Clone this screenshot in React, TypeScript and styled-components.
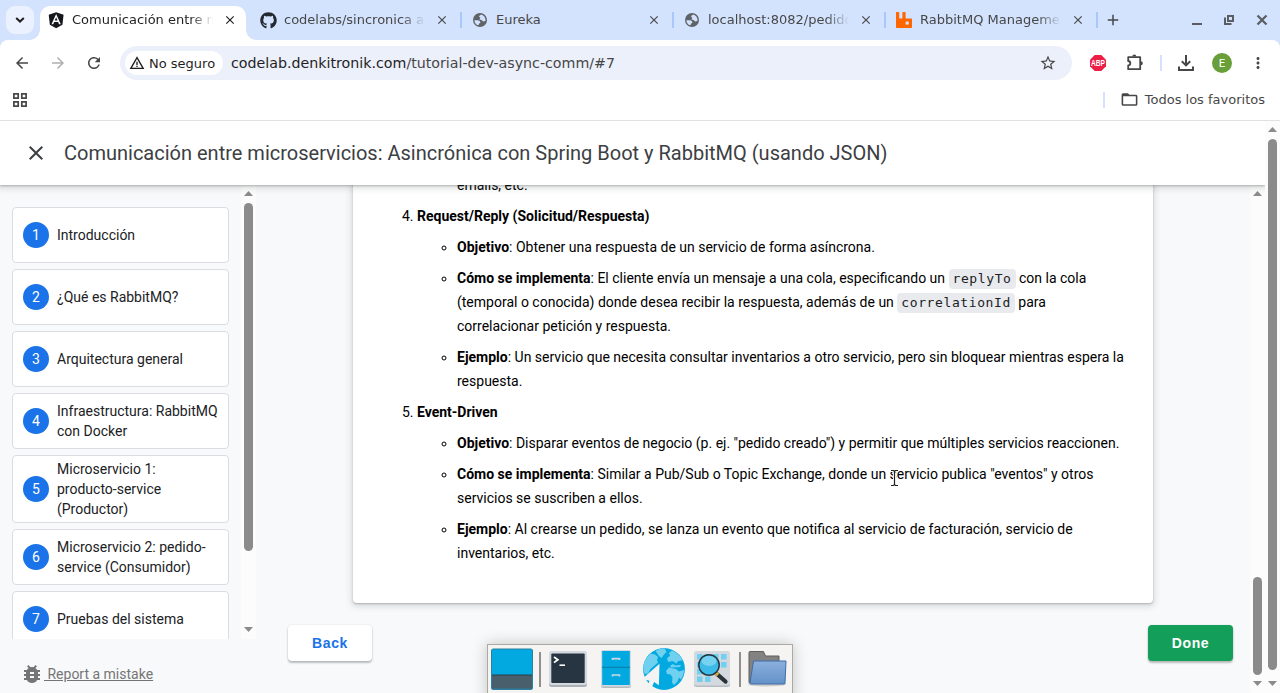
import React from "react";
import styled, { createGlobalStyle, css } from "styled-components";
import {
  MdArrowBack, MdArrowForward, MdRefresh, MdWarningAmber, MdStarBorder,
  MdFolderOpen, MdBugReport, MdClose, MdMoreVert, MdAdd,
} from "react-icons/md";
import { FaAngular, FaGithub } from "react-icons/fa";
import { SiRabbitmq } from "react-icons/si";

const Global = createGlobalStyle`
  * { box-sizing: border-box; }
  body { margin: 0; background: #fff; overflow: hidden; }
  svg { display: block; flex: none; }
`;

const ui = css`font-family: "DejaVu Sans", sans-serif;`;

const Window = styled.div`
  position: relative;
  width: 1280px;
  height: 693px;
  display: flex;
  flex-direction: column;
  overflow: hidden;
  ${ui}
`;

/* ---------- tab strip ---------- */
const TabStrip = styled.div`
  height: 40px;
  flex: none;
  display: flex;
  background: #d3e2fd;
`;
const TabSearch = styled.div`
  width: 28px;
  height: 28px;
  margin: 6px 6px 0 6px;
  border-radius: 9px;
  background: #ebf1fe;
  display: flex;
  align-items: center;
  justify-content: center;
`;
const TabDivider = styled.div`
  width: 2px;
  height: 16px;
  margin-left: auto;
  background: #a8c7fa;
`;
const Tab = styled.div<{ $active?: boolean }>`
  width: 212px;
  height: 40px;
  display: flex;
  align-items: center;
  padding: 0 0 0 10px;
  color: ${(p) => (p.$active ? "#1f1f1f" : "#474747")};
  ${(p) =>
    p.$active &&
    css`
      width: 206px;
      height: 34px;
      margin: 6px 4px 0 0;
      padding: 0 0 6px 8px;
      background: #fff;
      border-radius: 10px 10px 0 0;
      position: relative;
      &::before, &::after {
        content: "";
        position: absolute;
        bottom: 0;
        width: 10px;
        height: 10px;
      }
      &::before { left: -10px; background: radial-gradient(circle at 0 0, transparent 9.5px, #fff 10px); }
      &::after { right: -10px; background: radial-gradient(circle at 10px 0, transparent 9.5px, #fff 10px); }
    `}
`;
const Favicon = styled.div`
  width: 16px;
  height: 16px;
  display: flex;
  align-items: center;
  justify-content: center;
  margin-right: 8px;
  flex: none;
`;
const TabTitle = styled.div<{ $fade?: boolean }>`
  width: 143px;
  font-size: 13px;
  line-height: 20px;
  white-space: nowrap;
  overflow: hidden;
  ${(p) => p.$fade && css`mask-image: linear-gradient(90deg, #000 118px, transparent 141px);`}
`;
const TabClose = styled.div`
  width: 14px;
  height: 14px;
  margin-left: 8px;
`;
const NewTab = styled.div`
  width: 30px;
  display: flex;
  align-items: center;
  justify-content: center;
  color: #474747;
`;
const WindowButtons = styled.div`
  margin-left: auto;
  display: flex;
  align-items: center;
  gap: 21px;
  padding-right: 12px;
`;

/* ---------- toolbar ---------- */
const ToolbarBack = styled.div`
  background: #d3e2fd;
  flex: none;
`;
const Toolbar = styled.div`
  height: 46px;
  display: flex;
  align-items: center;
  background: #fff;
  border-radius: 8px 8px 0 0;
  color: #474747;
`;
const NavButton = styled.div<{ $dim?: boolean }>`
  width: 36px;
  display: flex;
  justify-content: center;
  color: ${(p) => (p.$dim ? "#b0b0b0" : "#474747")};
`;
const NavGroup = styled.div`
  display: flex;
  flex: none;
  padding-left: 4px;
  width: 120px;
`;
const Omnibox = styled.div`
  width: 952px;
  height: 34px;
  flex: none;
  border-radius: 17px;
  background: #ecf0fa;
  display: flex;
  align-items: center;
  padding: 0 15px 0 5px;
`;
const SecurityChip = styled.div`
  width: 98px;
  height: 24px;
  border-radius: 12px;
  background: #fff;
  display: flex;
  align-items: center;
  gap: 4px;
  padding-left: 4px;
  font-size: 13px;
  color: #1f1f1f;
  white-space: nowrap;
`;
const Url = styled.div`
  flex: 1;
  padding-left: 8px;
  font-size: 14.22px;
  color: #474747;
  white-space: nowrap;
  b { font-weight: 400; color: #1f1f1f; }
`;
const Extensions = styled.div`
  flex: 1;
  display: flex;
  align-items: center;
  padding-left: 18px;
`;
const Slot = styled.div<{ $w: number; $pad?: number }>`
  width: ${(p) => p.$w}px;
  padding-left: ${(p) => p.$pad ?? 0}px;
  flex: none;
  display: flex;
  justify-content: center;
`;
const Divider = styled.div`
  width: 2px;
  height: 16px;
  background: #d3e2fd;
`;
const Avatar = styled.div`
  width: 20px;
  height: 20px;
  border-radius: 50%;
  background: #689f38;
  color: #fff;
  font: 11.5px/20px Roboto, sans-serif;
  text-align: center;
`;
const Bookmarks = styled.div`
  height: 35px;
  border-bottom: 1px solid #dfe1e3;
  padding: 0 15px 7px 13px;
  display: flex;
  align-items: center;
  background: #fff;
  color: #474747;
  flex: none;
`;
const AllBookmarks = styled.div`
  margin-left: auto;
  display: flex;
  align-items: center;
  font-size: 13px;
  white-space: nowrap;
  ${Divider} { margin-right: 15px; }
  svg { margin-right: 6px; }
`;

/* ---------- page ---------- */
const Page = styled.div`
  flex: 1;
  min-height: 0;
  display: flex;
`;
const Codelab = styled.div`
  width: 1265px;
  display: flex;
  flex-direction: column;
  overflow: hidden;
  background: #f8f9fa;
  font-family: Roboto, sans-serif;
`;
const Header = styled.div`
  position: relative;
  z-index: 2;
  height: 64px;
  flex: none;
  display: flex;
  align-items: center;
  padding-left: 24px;
  gap: 16px;
  background: #fff;
  color: #3c4043;
  box-shadow: 0 1px 2px rgba(60, 64, 67, 0.3), 0 2px 6px 2px rgba(60, 64, 67, 0.15);
`;
const Title = styled.div`
  font-size: 20px;
  line-height: 28px;
  white-space: nowrap;
`;
const Body = styled.div`
  flex: 1;
  min-height: 0;
  display: flex;
  background: #f8f9fb;
`;
const Sidebar = styled.div`
  width: 256px;
  display: flex;
  flex-direction: column;
`;
const StepsScroller = styled.div`
  height: 454px;
  display: flex;
  overflow: hidden;
`;
const Steps = styled.div`
  width: 241px;
  padding: 22px 12px 0;
  display: flex;
  flex-direction: column;
  gap: 6px;
`;
const Step = styled.div`
  min-height: 56px;
  flex: none;
  display: flex;
  align-items: center;
  gap: 8px;
  padding: 3px 10px;
  background: #fff;
  border: 1px solid #dadce0;
  border-radius: 4px;
  font-size: 14px;
  line-height: 20px;
  color: #202124;
`;
const StepNumber = styled.div`
  width: 26px;
  height: 26px;
  border-radius: 50%;
  flex: none;
  background: #1a73e8;
  color: #fff;
  line-height: 26px;
  text-align: center;
`;
const Report = styled.div`
  flex: 1;
  display: flex;
  align-items: center;
  padding: 15px 0 0 20px;
  color: #757575;
  font-size: 14px;
  span { text-decoration: underline; white-space: pre; }
`;
const Track = styled.div`
  width: 15px;
  flex: none;
  padding: 6px 3px 7px;
  display: flex;
  flex-direction: column;
  align-items: center;
  background: #fcfcfc;
`;
const Thumb = styled.div<{ $top: number; $h: number }>`
  width: 9px;
  height: ${(p) => p.$h}px;
  margin-top: ${(p) => p.$top}px;
  border-radius: 5px;
  background: #8b8b8b;
  margin-bottom: auto;
`;
const Main = styled.div`
  flex: 1;
  display: flex;
  flex-direction: column;
  overflow: hidden;
`;
const Card = styled.div`
  width: 800px;
  margin: -19px 0 0 97px;
  padding: 0 24px 38px;
  background: #fff;
  border-radius: 4px;
  box-shadow: 0 1px 2px rgba(60, 64, 67, 0.3), 0 2px 6px 2px rgba(60, 64, 67, 0.15);
  font-size: 14px;
  line-height: 24px;
  color: #000;
  ol, ul { margin: 0; padding-left: 40px; }
  li { margin-bottom: 7px; }
  li > ul { margin-top: 7px; }
  li:last-child { margin-bottom: 0; }
`;
const Continued = styled.li`
  list-style: none;
`;
const Code = styled.code`
  font: 13px/20px "DejaVu Sans Mono", monospace;
  letter-spacing: 0.6px;
  padding: 2px 4px 3px;
  border-radius: 4px;
  background: #e8eaed;
  color: #202124;
`;
const Actions = styled.div`
  display: flex;
  justify-content: space-between;
  padding: 22px 17px 0 32px;
`;
const Button = styled.div<{ $primary?: boolean }>`
  width: ${(p) => (p.$primary ? 85 : 84)}px;
  height: 36px;
  border-radius: 4px;
  background: ${(p) => (p.$primary ? "#139f5a" : "#fff")};
  color: ${(p) => (p.$primary ? "#fff" : "#1a73e8")};
  font: bold 14px/36px "Liberation Sans", sans-serif;
  letter-spacing: 0.6px;
  text-align: center;
  box-shadow: 0 2px 2px rgba(0, 0, 0, 0.24), 0 0 2px rgba(0, 0, 0, 0.12);
`;

/* ---------- desktop overlays ---------- */
const Dock = styled.div`
  position: absolute;
  z-index: 3;
  left: 487px;
  top: 644px;
  width: 306px;
  height: 60px;
  padding: 3px;
  display: flex;
  background: #f5f4f2;
  border: 1px solid #aea8a3;
  box-shadow: 0 0 14px rgba(0, 0, 0, 0.22);
`;
const DockItem = styled.div<{ $start?: boolean }>`
  width: 48px;
  height: 42px;
  flex: none;
  display: flex;
  justify-content: ${(p) => (p.$start ? "flex-start" : "center")};
`;
const DockSeparator = styled.div<{ $before?: number; $after?: number }>`
  width: 2px;
  height: 35px;
  flex: none;
  margin: 4px ${(p) => p.$after ?? 0}px 0 ${(p) => p.$before ?? 0}px;
  background: #908f8d;
`;
const Pointer = styled.div`
  position: absolute;
  z-index: 3;
  left: 889px;
  top: 468px;
`;

const Arrow = ({ down }: { down?: boolean }) => (
  <svg width="9" height="5" viewBox="0 0 9 5">
    <path d={down ? "M0 0h9L4.5 5z" : "M0 5h9L4.5 0z"} fill="#8b8b8b" />
  </svg>
);

const Scrollbar = ({ top, height }: { top: number; height: number }) => (
  <Track>
    <Arrow />
    <Thumb $top={top} $h={height} />
    <Arrow down />
  </Track>
);

const GlobeIcon = () => (
  <svg width="14" height="14" viewBox="0 0 14 14">
    <circle cx="7" cy="7" r="7" fill="#5f6368" />
    <path
      d="M1.400 7.200h3.300c1.700 0 2.700 1 2.700 2.300 0 .8-1.200.7-1.500 1.300-.2.500.1 1-.5 1.500C3 11.700 1.400 9.600 1.400 7.200zM8.300 1.600C7.200 2.300 6 2.900 6.100 3.800c.1.700 1.300.3 1.300 1 0 .6-.9.700-.8 1.400.1.800 1.700.5 2.300 1.100.5.500.9 1.200 1.600 1.100.6 0 1-.5 2-.5.300-2.900-1.500-5.500-4.200-6.300z"
      fill="#d3e2fd"
    />
  </svg>
);

const tabs = [
  { icon: <FaAngular size={18.3} color="#15171c" />, title: "Comunicación entre microservicios", fade: true },
  { icon: <FaGithub size={17} color="#24292f" />, title: "codelabs/sincronica at main", fade: true },
  { icon: <GlobeIcon />, title: "Eureka" },
  { icon: <GlobeIcon />, title: "localhost:8082/pedidos", fade: true },
  { icon: <SiRabbitmq size={16} color="#ff6600" />, title: "RabbitMQ Management", fade: true },
];

const steps = [
  "Introducción",
  "¿Qué es RabbitMQ?",
  "Arquitectura general",
  "Infraestructura: RabbitMQ con Docker",
  "Microservicio 1: producto-service (Productor)",
  "Microservicio 2: pedido-service (Consumidor)",
  "Pruebas del sistema",
];

const BrowserTabs = () => (
  <TabStrip>
    <TabSearch>
      <svg width="10" height="6" viewBox="0 0 10 6"><path d="M1.2 1 5 4.6 8.8 1" fill="none" stroke="#1f1f1f" strokeWidth="2" /></svg>
    </TabSearch>
    {tabs.map((t, i) => (
      <Tab key={t.title} $active={i === 0}>
        <Favicon>{t.icon}</Favicon>
        <TabTitle $fade={t.fade}>{t.title}</TabTitle>
        <TabClose><MdClose size={14} /></TabClose>
        {i > 0 && <TabDivider />}
      </Tab>
    ))}
    <NewTab><MdAdd size={18} /></NewTab>
    <WindowButtons>
      <svg width="12" height="12" viewBox="0 0 12 12"><path d="M2 10h10" stroke="#5a5d61" strokeWidth="2" /></svg>
      <svg width="12" height="12" viewBox="0 0 12 12" fill="none" stroke="#5a5d61" strokeWidth="2"><path d="M5 2h5v5H5zM2 3.500V10h6.500" /></svg>
      <svg width="12" height="12" viewBox="0 0 12 12"><path d="m1.5 1.5 9 9m0-9-9 9" stroke="#5a5d61" strokeWidth="2.2" /></svg>
    </WindowButtons>
  </TabStrip>
);

const BrowserToolbar = () => (
  <ToolbarBack>
    <Toolbar>
      <NavGroup>
        <NavButton><MdArrowBack size={18} /></NavButton>
        <NavButton $dim><MdArrowForward size={18} /></NavButton>
        <NavButton><MdRefresh size={18} /></NavButton>
      </NavGroup>
      <Omnibox>
        <SecurityChip><MdWarningAmber size={16} />No seguro</SecurityChip>
        <Url><b>codelab.denkitronik.com</b>/tutorial-dev-async-comm/#7</Url>
        <MdStarBorder size={18} />
      </Omnibox>
      <Extensions>
        <Slot $w={16}>
          <svg width="16" height="16" viewBox="0 0 16 16">
            <path d="M4.7 0h6.6L16 4.7v6.6L11.3 16H4.7L0 11.3V4.7z" fill="#ed1e45" />
            <text x="1" y="11.200" textLength="14" lengthAdjust="spacingAndGlyphs" fontFamily="Liberation Sans, sans-serif" fontWeight="700" fontSize="8.800" fill="#fff">ABP</text>
          </svg>
        </Slot>
        <Slot $w={54} $pad={4}>
          <svg width="18" height="18" viewBox="0 0 18 18">
            <path d="M2.2 3.200h12v12h-12v-3.800c2.800-.3 2.800-4.100 0-4.400z" fill="none" stroke="#474747" strokeWidth="1.800" strokeLinejoin="round" />
            <path d="M6.300 2.600a2 2 0 0 1 4 0zM14.800 7.200a2 2 0 0 1 0 4z" fill="#474747" />
          </svg>
        </Slot>
        <Divider />
        <Slot $w={48}>
          <svg width="16" height="16" viewBox="0 0 16 16" fill="none" stroke="#474747" strokeWidth="2">
            <path d="M8 0v10M3.8 6.2 8 10.4l4.2-4.2M1 11.5V15h14v-3.5" />
          </svg>
        </Slot>
        <Slot $w={24}><Avatar>E</Avatar></Slot>
        <Slot $w={46} $pad={2}><MdMoreVert size={18} /></Slot>
      </Extensions>
    </Toolbar>
  </ToolbarBack>
);

const Content = () => (
  <Card>
    <ol start={3}>
      <Continued><ul><Continued>emails, etc.</Continued></ul></Continued>
      <li>
        <b>Request/Reply (Solicitud/Respuesta)</b>
        <ul>
          <li><b>Objetivo</b>: Obtener una respuesta de un servicio de forma asíncrona.</li>
          <li><b>Cómo se implementa</b>: El cliente envía un mensaje a una cola, especificando un <Code>replyTo</Code> con la cola (temporal o conocida) donde desea recibir la respuesta, además de un <Code>correlationId</Code> para correlacionar petición y respuesta.</li>
          <li><b>Ejemplo</b>: Un servicio que necesita consultar inventarios a otro servicio, pero sin bloquear mientras espera la respuesta.</li>
        </ul>
      </li>
      <li>
        <b>Event-Driven</b>
        <ul>
          <li><b>Objetivo</b>: Disparar eventos de negocio (p. ej. "pedido creado") y permitir que múltiples servicios reaccionen.</li>
          <li><b>Cómo se implementa</b>: Similar a Pub/Sub o Topic Exchange, donde un servicio publica "eventos" y otros servicios se suscriben a ellos.</li>
          <li><b>Ejemplo</b>: Al crearse un pedido, se lanza un evento que notifica al servicio de facturación, servicio de inventarios, etc.</li>
        </ul>
      </li>
    </ol>
  </Card>
);

const DesktopDock = () => (
  <Dock>
    <DockItem $start>
      <svg width="42" height="42" viewBox="0 0 42 42">
        <rect x="0" y="0.5" width="42" height="41.5" rx="2.500" fill="#2b7fa0" />
        <path d="M1 1.5h40V27H1z" fill="#02a9e0" />
        <path d="M1 27h40v13.500H1z" fill="#4a5f6c" />
        <path d="M1 27h40" stroke="#2a3d49" strokeWidth="1" />
      </svg>
    </DockItem>
    <DockSeparator $after={3} />
    <DockItem>
      <svg width="40" height="42" viewBox="0 0 40 42">
        <rect x="1" y="4" width="38" height="35" rx="2.5" fill="#aab2b8" />
        <rect x="1" y="3" width="38" height="34" rx="2.5" fill="#d3d9de" />
        <rect x="3.300" y="5.500" width="33.400" height="29.500" rx="1" fill="#263541" />
        <path d="m6 9 3.8 2.8L6 14.6" fill="none" stroke="#fff" strokeWidth="1.8" />
        <path d="M11.5 17.2H17" stroke="#fff" strokeWidth="1.6" />
      </svg>
    </DockItem>
    <DockItem>
      <svg width="32" height="42" viewBox="0 0 32 42">
        <rect x="1" y="3" width="30" height="37" rx="2.5" fill="#b4bcc2" />
        <rect x="1" y="2" width="30" height="36.5" rx="2.5" fill="#d3d9de" />
        <path d="M2.2 3h27.6v34H2.2z" fill="#02a9e0" />
        <path d="M2.2 19.4h27.6" stroke="#0784b2" strokeWidth="1.4" />
        <path d="M12.5 12V10.6h7V12M12.5 28.500V27h7v1.500" fill="none" stroke="#c3dbe5" strokeWidth="1.6" />
      </svg>
    </DockItem>
    <DockItem>
      <svg width="42" height="42" viewBox="0 0 42 42">
        <circle cx="21" cy="21" r="20.900" fill="#02a9e0" />
        <path d="M7.500 5.500C3 9.500.5 14.500.3 20l1.200 6 3.500-.5 2.500-4.500 3.500-3 4-3.500L14 12l1-3-3-2.500z" fill="#6fd0ef" />
        <path d="m12.500 3 4-2 5-.8L23.500 4 21 6.500 18.500 10 16 8z" fill="#6fd0ef" />
        <path d="m24 10 3-2-1-3 3-2.500c5 2 8.500 5 10.500 10L35 13l-1.500 2.500-4-2.500-4.500 1zM27 18l3-2 2 1.500 6-.5-1 2-9 .5zM23 23l3-3.500 7 1.500 3 2.500 5-1.500c0 4-1.500 7-3 9.500l-2-2-1.500 4-3.500 3.500-2-2.500.5-5-2-3-3.500-.5z" fill="#6fd0ef" />
        <path d="m-1 31 17.500-15.300-.6 21.600-4.800-3.400-3.400 8-3.600-2 2.400-7.100z" fill="#f3f3f3" />
      </svg>
    </DockItem>
    <DockItem>
      <svg width="38" height="42" viewBox="0 0 38 42">
        <rect x="1" y="4" width="36" height="35" rx="2.500" fill="#b4bcc2" />
        <rect x="1" y="3" width="36" height="34.500" rx="2.500" fill="#d3d9de" />
        <path d="M4 6h5.500v5.500H4zM12 6h5.500v5.500H12zM20 6h5.500v5.500H20zM28 6h5.500v5.500H28zM28 14h5.500v5.500H28zM4 14h5.500v5.500H4zM4 21h5.500v5.500H4zM4 28.500h5.500V34H4zM12 28.500h5.500V34H12z" fill="#6fd0ef" />
        <path d="m24 26 8.500 7.500" stroke="#2b3338" strokeWidth="4.200" strokeLinecap="round" />
        <path d="m22 24.300 3 2.700" stroke="#d8b53d" strokeWidth="3.400" />
        <circle cx="16" cy="17" r="10.200" fill="#3dbbe8" stroke="#27363f" strokeWidth="1.500" />
        <ellipse cx="16" cy="13" rx="7.500" ry="5" fill="#8edcf5" opacity=".7" />
      </svg>
    </DockItem>
    <DockSeparator $before={3} $after={2} />
    <DockItem>
      <svg width="40" height="42" viewBox="0 0 40 42">
        <defs>
          <linearGradient id="folder" x1="0" y1="0" x2="0" y2="1"><stop offset="0" stopColor="#8bb0dd" /><stop offset="1" stopColor="#6391c9" /></linearGradient>
        </defs>
        <ellipse cx="20" cy="36" rx="19" ry="2.500" fill="#000" opacity=".16" />
        <path d="M2 34.500V4.500q0-1 1-1h13.500l2 4.500h13.500v26.500z" fill="#828282" stroke="#5f5f5f" />
        <path d="M6.500 13h32.500L38 35q0 1-1 1H4q-1 0-1-1z" fill="url(#folder)" stroke="#3e6dab" />
      </svg>
    </DockItem>
  </Dock>
);

export default function App() {
  return (
    <Window>
      <Global />
      <BrowserTabs />
      <BrowserToolbar />
      <Bookmarks>
        <svg width="14" height="14" viewBox="0 0 14 14" fill="none" stroke="#474747" strokeWidth="1.700">
          <path d="M.9.9h4.300v4.300H.9zM8.800.9h4.300v4.300H8.800zM.9 8.800h4.300v4.300H.9zM8.800 8.800h4.300v4.300H8.800z" />
        </svg>
        <AllBookmarks><Divider /><MdFolderOpen size={19} />Todos los favoritos</AllBookmarks>
      </Bookmarks>
      <Page>
        <Codelab>
          <Header>
            <MdClose size={24} />
            <Title>Comunicación entre microservicios: Asincrónica con Spring Boot y RabbitMQ (usando JSON)</Title>
          </Header>
          <Body>
            <Sidebar>
              <StepsScroller>
                <Steps>
                  {steps.map((s, i) => (
                    <Step key={s}><StepNumber>{i + 1}</StepNumber>{s}</Step>
                  ))}
                </Steps>
                <Scrollbar top={7} height={348} />
              </StepsScroller>
              <Report><MdBugReport size={24} /><span> Report a mistake</span></Report>
            </Sidebar>
            <Main>
              <Content />
              <Actions>
                <Button>Back</Button>
                <Button $primary>Done</Button>
              </Actions>
            </Main>
            <Scrollbar top={381} height={98} />
          </Body>
        </Codelab>
        <Scrollbar top={7} height={531} />
      </Page>
      <DesktopDock />
      <Pointer>
        <svg width="11" height="20" viewBox="0 0 11 20" fill="none">
          <path d="M2 2.500h2.500l1 1 1-1H9M5.500 3.500v13M2 17.500h2.500l1-1 1 1H9" stroke="#fff" strokeWidth="3" />
          <path d="M2 2.500h2.500l1 1 1-1H9M5.500 3.500v13M2 17.500h2.500l1-1 1 1H9" stroke="#222" strokeWidth="1.200" />
        </svg>
      </Pointer>
    </Window>
  );
}
